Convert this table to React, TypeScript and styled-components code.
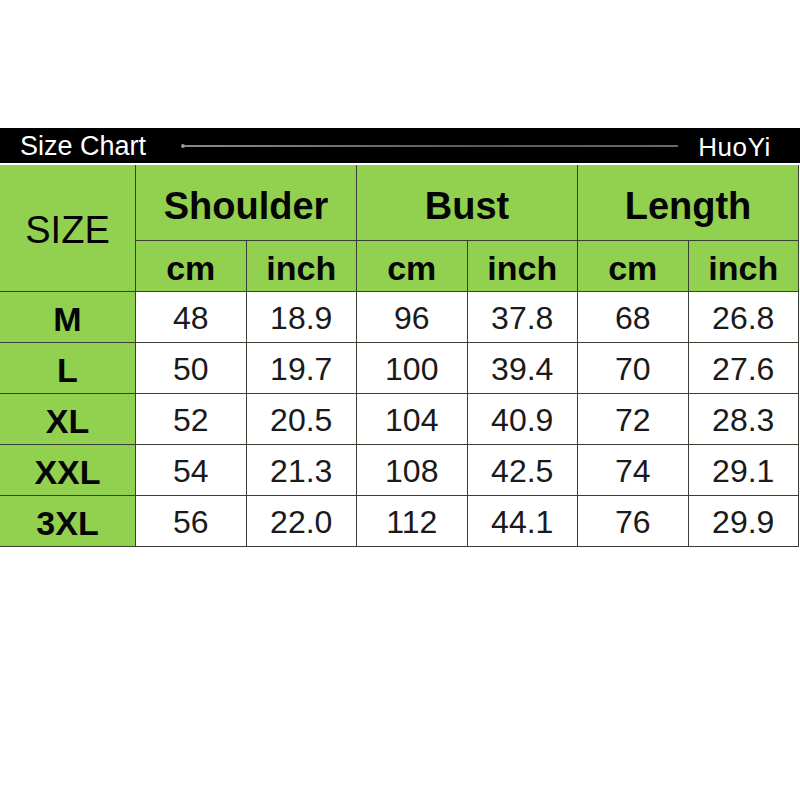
import styled, { createGlobalStyle } from "styled-components";

const GlobalStyle = createGlobalStyle`
  html, body {
    margin: 0;
    padding: 0;
    background: #ffffff;
  }
  body {
    font-family: "Liberation Sans", Arial, sans-serif;
  }
`;

const sizes = [
  { size: "M", values: ["48", "18.9", "96", "37.8", "68", "26.8"] },
  { size: "L", values: ["50", "19.7", "100", "39.4", "70", "27.6"] },
  { size: "XL", values: ["52", "20.5", "104", "40.9", "72", "28.3"] },
  { size: "XXL", values: ["54", "21.3", "108", "42.5", "74", "29.1"] },
  { size: "3XL", values: ["56", "22.0", "112", "44.1", "76", "29.9"] },
];

const groups = ["Shoulder", "Bust", "Length"];

const App = () => {
  return (
    <Page>
      <GlobalStyle />
      <TitleBar>
        <Title>Size Chart</Title>
        <Rule>
          <Dot />
          <Line />
        </Rule>
        <Brand>HuoYi</Brand>
      </TitleBar>
      <Table>
        <SizeHead>SIZE</SizeHead>
        {groups.map((g) => (
          <GroupHead key={g}>{g}</GroupHead>
        ))}
        {groups.map((g) => [
          <UnitHead key={g + "cm"}>cm</UnitHead>,
          <UnitHead key={g + "in"}>inch</UnitHead>,
        ])}
        {sizes.map((row) => [
          <SizeLabel key={row.size}>{row.size}</SizeLabel>,
          ...row.values.map((v, i) => <Value key={row.size + i}>{v}</Value>),
        ])}
      </Table>
    </Page>
  );
};

export default App;

const Page = styled.div`
  width: 800px;
  height: 800px;
  padding-top: 128px;
  box-sizing: border-box;
  background: #fff;
`;

const TitleBar = styled.div`
  height: 35px;
  background: #000;
  display: flex;
  align-items: center;
  padding: 0 29px 0 20px;
  color: #fff;
  margin-bottom: 2px;
`;

const Title = styled.div`
  font-size: 27px;
  line-height: 1;
  margin-top: 2px;
`;

const Rule = styled.div`
  flex: 1;
  display: flex;
  align-items: center;
  margin: 0 20px 0 35px;
`;

const Dot = styled.span`
  width: 4px;
  height: 4px;
  border-radius: 50%;
  background: #9a9a9a;
  flex: none;
`;

const Line = styled.span`
  flex: 1;
  height: 2px;
  background: linear-gradient(to right, #8a8a8a, #5a5a5a 60%, #6a6a6a);
`;

const Brand = styled.div`
  font-size: 26px;
  line-height: 1;
  letter-spacing: 0.6px;
  margin-top: 2px;
`;

const Table = styled.div`
  display: grid;
  grid-template-columns: 135px repeat(6, 1fr);
  grid-template-rows: 75px 50px repeat(5, 50px);
  gap: 1px;
  background: #3a3f36;
  width: 799px;
  padding: 0 1px 1px 0;
  box-sizing: border-box;
`;

const GreenCell = styled.div`
  background: #92d050;
  display: flex;
  align-items: center;
  justify-content: center;
  color: #050505;
`;

const SizeHead = styled(GreenCell)`
  grid-row: span 2;
  font-size: 38px;
  padding-top: 4px;
`;

const GroupHead = styled(GreenCell)`
  grid-column: span 2;
  font-size: 38px;
  font-weight: bold;
  padding-top: 8px;
`;

const UnitHead = styled(GreenCell)`
  font-size: 34px;
  font-weight: bold;
  padding-top: 5px;
`;

const SizeLabel = styled(GreenCell)`
  font-size: 34px;
  font-weight: bold;
  padding-top: 4px;
`;

const Value = styled.div`
  background: #fff;
  display: flex;
  align-items: center;
  justify-content: center;
  font-size: 32px;
  color: #1a1a1a;
  padding-top: 3px;
`;
